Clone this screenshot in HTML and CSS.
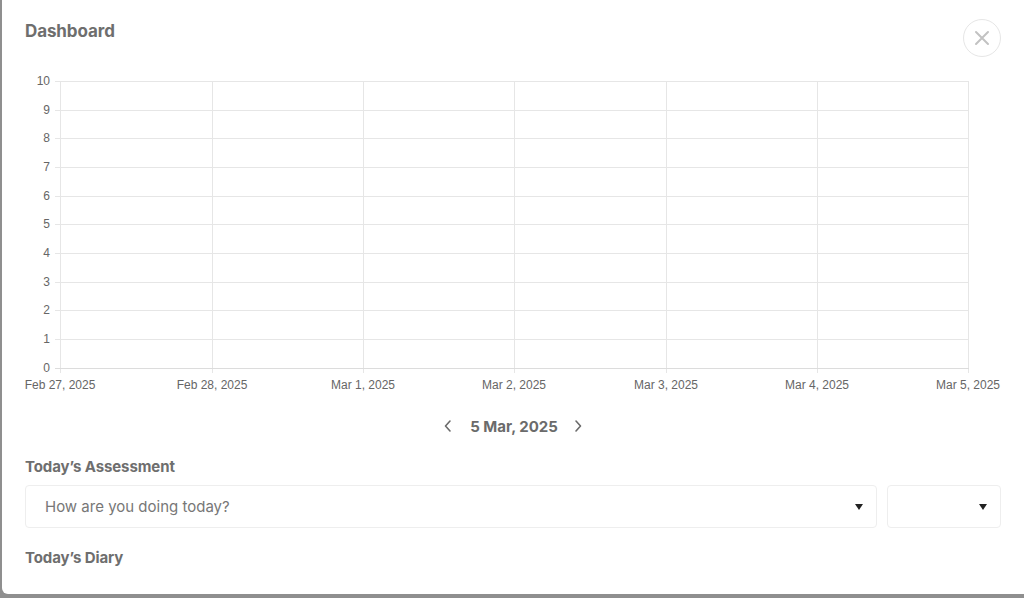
FILE: index.html
```html
<!DOCTYPE html>
<html>
<head>
<meta charset="utf-8">
<link rel="stylesheet" href="styles.css">
</head>
<body>
<div class="modal">
  <div class="header">
    <h1 class="title">Dashboard</h1>
    <button class="close" aria-label="Close">
      <svg width="16" height="16" viewBox="0 0 16 16"><path d="M2 2 L14 14 M14 2 L2 14" stroke="#c2c2c2" stroke-width="2" stroke-linecap="round" fill="none"/></svg>
    </button>
  </div>
  <svg class="chart" width="976" height="322" viewBox="0 0 976 322">
    <g stroke="#e6e6e6" stroke-width="1" shape-rendering="crispEdges">
      <line x1="30" y1="9.5" x2="943" y2="9.5"/>
      <line x1="30" y1="38.5" x2="943" y2="38.5"/>
      <line x1="30" y1="66.5" x2="943" y2="66.5"/>
      <line x1="30" y1="95.5" x2="943" y2="95.5"/>
      <line x1="30" y1="124.5" x2="943" y2="124.5"/>
      <line x1="30" y1="152.5" x2="943" y2="152.5"/>
      <line x1="30" y1="181.5" x2="943" y2="181.5"/>
      <line x1="30" y1="210.5" x2="943" y2="210.5"/>
      <line x1="30" y1="238.5" x2="943" y2="238.5"/>
      <line x1="30" y1="267.5" x2="943" y2="267.5"/>
      <line x1="35.5" y1="9" x2="35.5" y2="301"/>
      <line x1="187.5" y1="9" x2="187.5" y2="301"/>
      <line x1="338.5" y1="9" x2="338.5" y2="301"/>
      <line x1="489.5" y1="9" x2="489.5" y2="301"/>
      <line x1="641.5" y1="9" x2="641.5" y2="301"/>
      <line x1="792.5" y1="9" x2="792.5" y2="301"/>
      <line x1="943.5" y1="9" x2="943.5" y2="301"/>
    </g>
    <line x1="30" y1="296.5" x2="944" y2="296.5" stroke="#dcdcdc" shape-rendering="crispEdges"/>
    <g class="ylab" text-anchor="end">
      <text x="25" y="13">10</text>
      <text x="25" y="42">9</text>
      <text x="25" y="70">8</text>
      <text x="25" y="99">7</text>
      <text x="25" y="128">6</text>
      <text x="25" y="156">5</text>
      <text x="25" y="185">4</text>
      <text x="25" y="214">3</text>
      <text x="25" y="242">2</text>
      <text x="25" y="271">1</text>
      <text x="25" y="300">0</text>
    </g>
    <g class="xlab" text-anchor="middle">
      <text x="35" y="317">Feb 27, 2025</text>
      <text x="187" y="317">Feb 28, 2025</text>
      <text x="338" y="317">Mar 1, 2025</text>
      <text x="489" y="317">Mar 2, 2025</text>
      <text x="641" y="317">Mar 3, 2025</text>
      <text x="792" y="317">Mar 4, 2025</text>
      <text x="943" y="317">Mar 5, 2025</text>
    </g>
  </svg>
  <div class="datenav">
    <button class="chev" aria-label="Previous">
      <svg width="10" height="14" viewBox="0 0 10 14"><path d="M7 2 L2.5 7 L7 12" stroke="#6b6b6b" stroke-width="1.6" fill="none" stroke-linecap="round" stroke-linejoin="round"/></svg>
    </button>
    <span class="date">5 Mar, 2025</span>
    <button class="chev" aria-label="Next">
      <svg width="10" height="14" viewBox="0 0 10 14"><path d="M3 2 L7.5 7 L3 12" stroke="#6b6b6b" stroke-width="1.6" fill="none" stroke-linecap="round" stroke-linejoin="round"/></svg>
    </button>
  </div>
  <h2 class="label">Today’s Assessment</h2>
  <div class="selects">
    <div class="select main">
      <span class="placeholder">How are you doing today?</span>
      <span class="caret"></span>
    </div>
    <div class="select small">
      <span class="caret"></span>
    </div>
  </div>
  <h2 class="label diary">Today’s Diary</h2>
</div>
</body>
</html>
```
FILE: styles.css
```css
html, body {
  margin: 0;
  padding: 0;
  height: 100%;
  overflow: hidden;
}
body {
  background: #8f8f8f;
  font-family: Inter, "Noto Sans", sans-serif;
}
.modal {
  margin-left: 2px;
  height: 594px;
  background: #fff;
  border-radius: 0 0 0 6px;
  padding: 19px 23px 0 23px;
  box-sizing: border-box;
  display: flex;
  flex-direction: column;
}
.header {
  display: flex;
  justify-content: space-between;
  align-items: flex-start;
  height: 38px;
}
.title {
  margin: 2px 0 0 0;
  font-size: 17px;
  line-height: 20px;
  font-weight: 700;
  color: #6e6e6e;
  letter-spacing: -0.1px;
}
.close {
  width: 38px;
  height: 38px;
  border-radius: 50%;
  border: 1px solid #e6e6e6;
  background: #fff;
  padding: 0;
  display: flex;
  align-items: center;
  justify-content: center;
  cursor: pointer;
}
.chart {
  display: block;
  margin-top: 15px;
  flex: none;
}
.chart text {
  font-family: "Liberation Sans", Arial, sans-serif;
  font-size: 12px;
  fill: #666;
}
.datenav {
  margin-top: 17px;
  height: 30px;
  display: flex;
  align-items: center;
  justify-content: center;
  gap: 9px;
}
.chev {
  border: 0;
  background: none;
  padding: 0;
  width: 14px;
  height: 20px;
  display: flex;
  align-items: center;
  justify-content: center;
}
.date {
  font-size: 15px;
  font-weight: 700;
  color: #6b6b6b;
  padding: 0 4px;
  margin-left: 2px;
}
.label {
  margin: 16px 0 0 0;
  font-size: 15px;
  line-height: 20px;
  font-weight: 700;
  color: #6e6e6e;
  letter-spacing: -0.1px;
}
.label.diary {
  margin-top: 20px;
}
.selects {
  margin-top: 8px;
  display: flex;
  gap: 10px;
}
.select {
  height: 43px;
  box-sizing: border-box;
  border: 1px solid #eeeeee;
  border-radius: 4px;
  display: flex;
  align-items: center;
  padding: 0 13px 0 19px;
}
.select.main {
  flex: 1;
}
.select.small {
  width: 114px;
  flex: none;
}
.placeholder {
  flex: 1;
  font-size: 15px;
  color: #777;
}
.select.small .caret {
  margin-left: auto;
}
.caret {
  width: 0;
  height: 0;
  border-left: 4.5px solid transparent;
  border-right: 4.5px solid transparent;
  border-top: 6px solid #222;
}
```
